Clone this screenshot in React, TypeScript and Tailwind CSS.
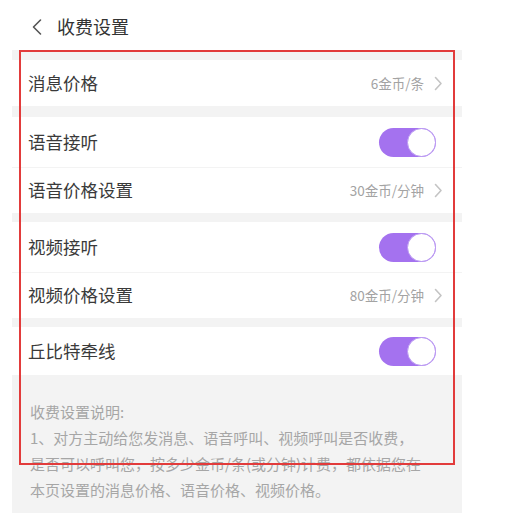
import React from "react";

const font = { fontFamily: '"Noto Sans CJK SC", "Noto Sans", sans-serif' };

function Chevron() {
  return (
    <svg width="9" height="15" viewBox="0 0 9 15" className="ml-[10px]">
      <path d="M1.5 1.5 L7 7.5 L1.5 13.5" fill="none" stroke="#c4c4c4" strokeWidth="1.6" strokeLinecap="round" strokeLinejoin="round" />
    </svg>
  );
}

function Toggle() {
  return (
    <div className="w-[57px] h-[29px] rounded-full bg-[#a472ef] flex items-center justify-end mr-[26px]">
      <div className="w-[29px] h-[29px] rounded-full bg-white border-[1.5px] border-[#b896f2]" />
    </div>
  );
}

function PriceRow({ label, value, h }: { label: string; value: string; h: string }) {
  return (
    <div className={`bg-white flex items-center justify-between pl-[16px] pr-[19px] ${h}`}>
      <span className="text-[17.5px] text-[#3a3a3a]">{label}</span>
      <div className="flex items-center">
        <span className="text-[13.5px] text-[#a3a3a3]">{value}</span>
        <Chevron />
      </div>
    </div>
  );
}

function ToggleRow({ label, h }: { label: string; h: string }) {
  return (
    <div className={`bg-white flex items-center justify-between pl-[16px] ${h}`}>
      <span className="text-[17.5px] text-[#3a3a3a]">{label}</span>
      <Toggle />
    </div>
  );
}

export default function App() {
  return (
    <div className="w-[510px] h-[513px] bg-white overflow-hidden relative" style={font}>
      <div className="ml-[12px] w-[450px] h-[513px] flex flex-col">
        <div className="h-[50px] bg-white flex items-center pt-[3px]">
          <svg width="12" height="18" viewBox="0 0 12 18" className="ml-[19px]">
            <path d="M9.5 2 L2.5 9 L9.5 16" fill="none" stroke="#555" strokeWidth="1.6" strokeLinecap="round" strokeLinejoin="round" />
          </svg>
          <span className="ml-[14px] text-[18px] text-[#333]">收费设置</span>
        </div>
        <div className="h-[10px] bg-[#f3f3f3]" />
        <PriceRow label="消息价格" value="6金币/条" h="h-[46px]" />
        <div className="h-[11px] bg-[#f3f3f3]" />
        <ToggleRow label="语音接听" h="h-[50px]" />
        <div className="h-px bg-[#f3f3f3]" />
        <PriceRow label="语音价格设置" value="30金币/分钟" h="h-[45px]" />
        <div className="h-[9px] bg-[#f3f3f3]" />
        <ToggleRow label="视频接听" h="h-[50px]" />
        <div className="h-px bg-[#f3f3f3]" />
        <PriceRow label="视频价格设置" value="80金币/分钟" h="h-[45px]" />
        <div className="h-[9px] bg-[#f3f3f3]" />
        <ToggleRow label="丘比特牵线" h="h-[48px]" />
        <div className="flex-1 bg-[#f3f3f3] pl-[18px] pr-[8px] pt-[24px] text-[15px] leading-[26px] text-[#a6a6a6] whitespace-nowrap">
          <p>收费设置说明:</p>
          <p>1、对方主动给您发消息、语音呼叫、视频呼叫是否收费，</p>
          <p>是否可以呼叫您，按多少金币/条(或分钟)计费，都依据您在</p>
          <p>本页设置的消息价格、语音价格、视频价格。</p>
        </div>
      </div>
      <div className="absolute left-[19px] top-[50px] w-[436px] h-[415px] border-2 border-[#e23b3b] pointer-events-none" />
    </div>
  );
}
